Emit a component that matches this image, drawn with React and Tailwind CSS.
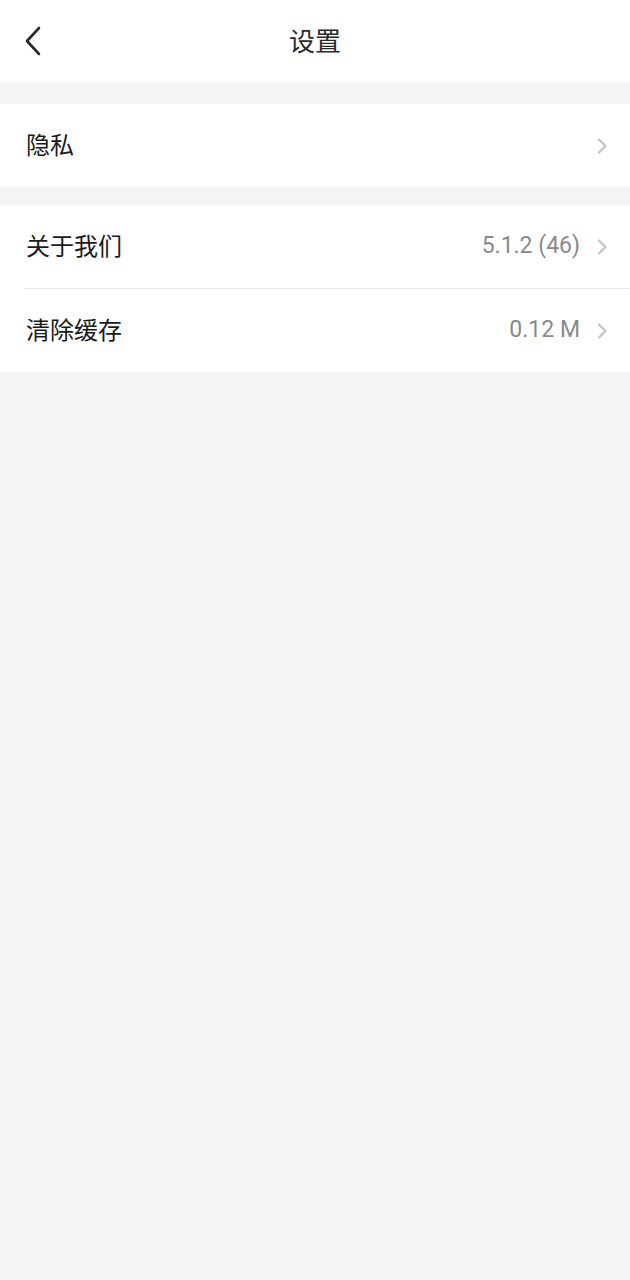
import React from 'react';

const font = { fontFamily: '"Roboto", "Noto Sans CJK SC", sans-serif' };

function Chevron() {
  return (
    <svg width="12" height="18" viewBox="0 0 12 18" className="ml-4 shrink-0">
      <path d="M3 2.5 L9.5 9 L3 15.5" fill="none" stroke="#c4c4c4" strokeWidth="2.2" strokeLinecap="round" strokeLinejoin="round" />
    </svg>
  );
}

function Row({ label, value }) {
  return (
    <div className="flex h-[83px] items-center pl-[26px] pr-[22px]">
      <span className="flex-1 text-[24px] text-[#1a1a1a]">{label}</span>
      {value && <span className="text-[23px] text-[#8a8a8a]">{value}</span>}
      <Chevron />
    </div>
  );
}

export default function App() {
  return (
    <div className="min-h-screen bg-[#f4f4f4]" style={font}>
      <header className="relative flex h-[82px] items-center justify-center bg-white">
        <button type="button" className="absolute left-[22px] top-[25px]">
          <svg width="22" height="32" viewBox="0 0 22 32">
            <path d="M17 3 L5 16 L17 29" fill="none" stroke="#2a2a2a" strokeWidth="2.6" strokeLinecap="round" strokeLinejoin="round" />
          </svg>
        </button>
        <h1 className="pt-[2px] text-[26px] text-[#2a2a2a]">设置</h1>
      </header>

      <div className="mt-[22px] bg-white">
        <Row label="隐私" />
      </div>

      <div className="mt-[18px] bg-white">
        <Row label="关于我们" value="5.1.2 (46)" />
        <div className="ml-[24px] h-px bg-[#ebebeb]"></div>
        <Row label="清除缓存" value="0.12 M" />
      </div>
    </div>
  );
}
